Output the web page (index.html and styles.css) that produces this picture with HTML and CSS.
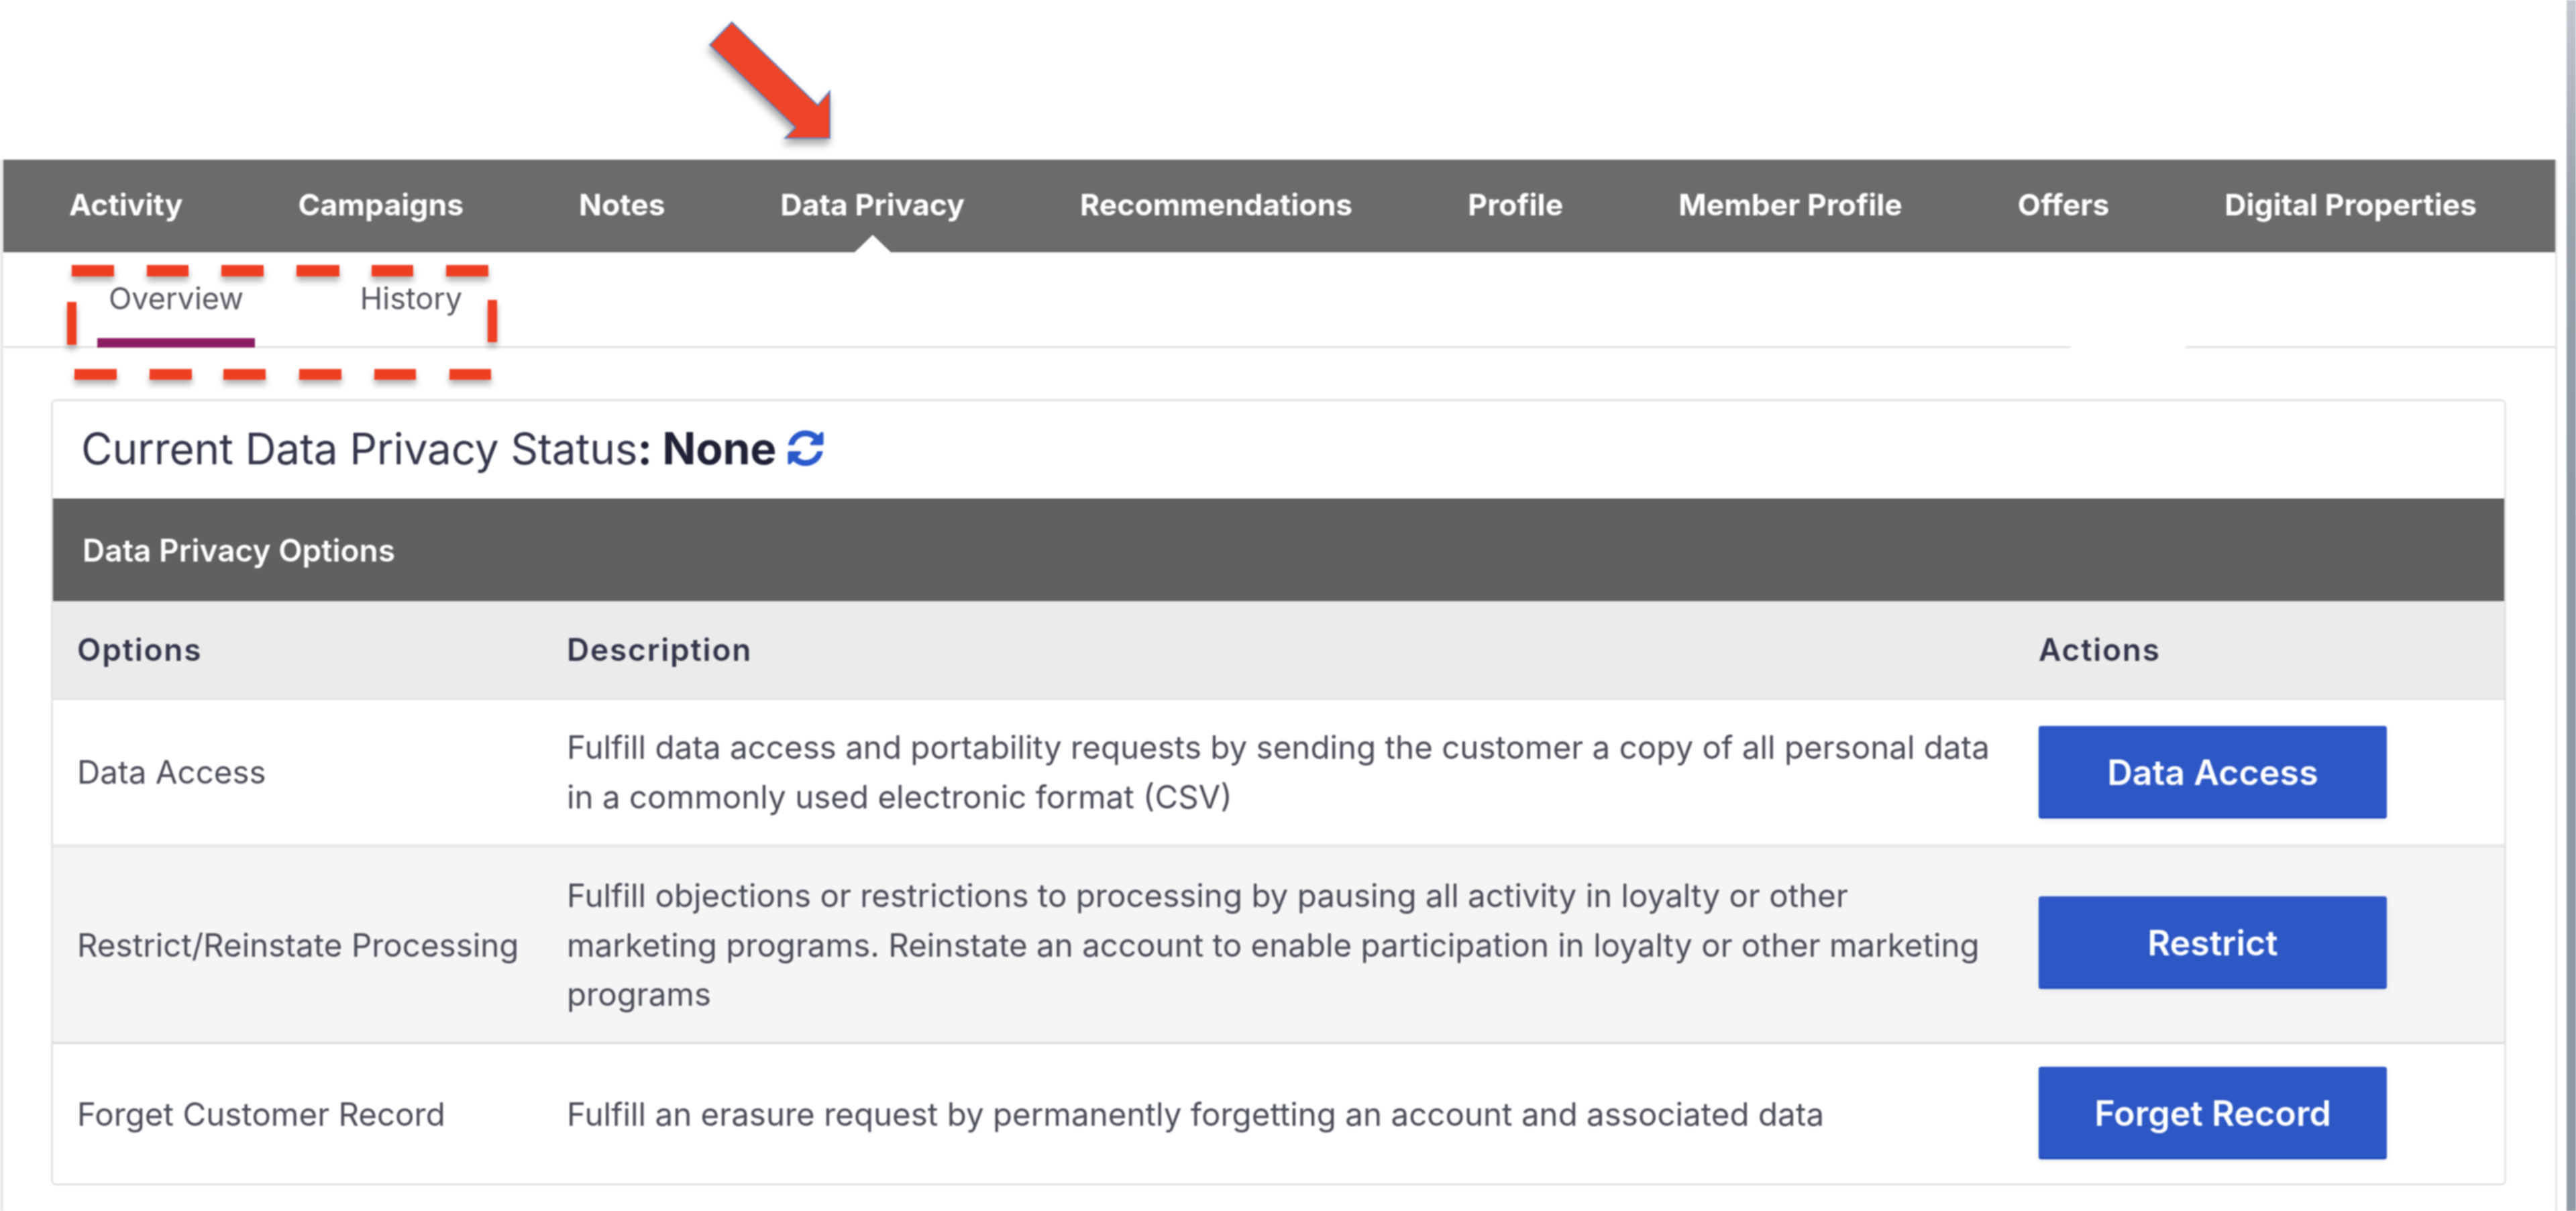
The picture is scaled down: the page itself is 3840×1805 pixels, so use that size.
FILE: index.html
```html
<!DOCTYPE html>
<html lang="en">
<head>
<meta charset="utf-8">
<title>Data Privacy</title>
<link rel="stylesheet" href="styles.css">
</head>
<body>
<div class="page">
  <div class="frame">
    <nav class="nav">
      <a class="nav-item">Activity</a>
      <a class="nav-item">Campaigns</a>
      <a class="nav-item">Notes</a>
      <a class="nav-item active">Data Privacy</a>
      <a class="nav-item">Recommendations</a>
      <a class="nav-item">Profile</a>
      <a class="nav-item">Member Profile</a>
      <a class="nav-item">Offers</a>
      <a class="nav-item">Digital Properties</a>
    </nav>
    <div class="tabs">
      <a class="tab selected">Overview</a>
      <a class="tab">History</a>
      <span class="line-gap"></span>
    </div>
    <section class="card">
      <h1 class="status"><span class="status-text">Current Data Privacy Status<strong>: None</strong></span>
        <svg class="refresh" viewBox="0 0 1792 1792" aria-hidden="true"><path d="M1639 1056q0 5-1 7-64 268-268 434.500t-478 166.500q-146 0-282.500-55t-243.500-157l-129 129q-19 19-45 19t-45-19-19-45v-448q0-26 19-45t45-19h448q26 0 45 19t19 45-19 45l-137 137q71 66 161 102t187 36q134 0 250-65t186-179q11-17 53-117 8-23 30-23h192q13 0 22.500 9.500t9.500 22.500zm25-800v448q0 26-19 45t-45 19h-448q-26 0-45-19t-19-45 19-45l138-138q-148-137-349-137-134 0-250 65t-186 179q-11 17-53 117-8 23-30 23h-199q-13 0-22.500-9.500t-9.500-22.500v-7q65-268 270-434.500t480-166.500q146 0 284 55.500t245 156.500l130-129q19-19 45-19t45 19 19 45z"/></svg>
      </h1>
      <h2 class="band">Data Privacy Options</h2>
      <table class="options">
        <colgroup><col class="c1"><col class="c2"><col class="c3"></colgroup>
        <thead>
          <tr class="head"><th>Options</th><th>Description</th><th>Actions</th></tr>
        </thead>
        <tbody>
          <tr class="r1">
            <td>Data Access</td>
            <td>Fulfill data access and portability requests by sending the customer a copy of all personal data<br>in a commonly used electronic format (CSV)</td>
            <td><button class="btn">Data Access</button></td>
          </tr>
          <tr class="r2">
            <td>Restrict/Reinstate Processing</td>
            <td>Fulfill objections or restrictions to processing by pausing all activity in loyalty or other<br>marketing programs. Reinstate an account to enable participation in loyalty or other marketing<br>programs</td>
            <td><button class="btn">Restrict</button></td>
          </tr>
          <tr class="r3">
            <td>Forget Customer Record</td>
            <td>Fulfill an erasure request by permanently forgetting an account and associated data</td>
            <td><button class="btn">Forget Record</button></td>
          </tr>
        </tbody>
      </table>
    </section>
  </div>
  <div class="edge"></div>
  <svg class="annot" viewBox="0 0 3840 1805" aria-hidden="true">
    <polygon class="arrow" points="1091,33 1219,157 1237,136 1237,206 1170,206 1186,190 1058,67"/>
    <g class="dash">
      <rect x="107" y="395" width="63" height="17"/><rect x="219" y="395" width="62" height="17"/><rect x="330" y="395" width="63" height="17"/><rect x="442" y="395" width="64" height="17"/><rect x="554" y="395" width="62" height="17"/><rect x="665" y="395" width="63" height="17"/>
      <rect x="100" y="450" width="14" height="64"/><rect x="727" y="447" width="14" height="63"/>
      <rect x="111" y="550" width="63" height="16"/><rect x="223" y="550" width="63" height="16"/><rect x="333" y="550" width="63" height="16"/><rect x="446" y="550" width="63" height="16"/><rect x="558" y="550" width="62" height="16"/><rect x="670" y="550" width="62" height="16"/>
    </g>
  </svg>
</div>
</body>
</html>
```
FILE: styles.css
```css
* { box-sizing: border-box; }
html, body { margin: 0; padding: 0; background: #fff; }
body { font-family: "Inter", "Liberation Sans", sans-serif; color: #3c3e4c; }
.page { position: relative; width: 3840px; height: 1805px; overflow: hidden; padding: 238px 0 0 0; filter: blur(1.2px); background: #fff; }
.frame { width: 3812px; height: 1567px; border-left: 5px solid #e9e9e9; border-right: 3px solid #e6e6e6; display: flex; flex-direction: column; }
.nav { height: 138px; background: #6b6b6b; display: flex; align-items: center; gap: 172px; padding: 0 0 0 98px; flex: none; }
.nav-item { position: relative; color: #fff; font-size: 44.5px; font-weight: 700; line-height: 134px; height: 138px; white-space: nowrap; }
.nav-item.active::after { content: ""; position: absolute; left: 50%; bottom: 0; margin-left: -27px; border-left: 27px solid transparent; border-right: 27px solid transparent; border-bottom: 26px solid #fff; }
.tabs { position: relative; height: 143px; flex: none; display: flex; border-bottom: 3px solid #e4e4e4; padding-left: 140px; gap: 0; }
.tab { width: 235px; margin-right: 148px; height: 142px; padding-top: 42px; text-align: center; color: #55575f; font-size: 45px; line-height: 54px; }
.tab + .tab { width: 170px; margin-right: 0; }
.tab.selected { border-bottom: 14px solid #8b1e63; }
.line-gap { position: absolute; left: 3082px; width: 171px; bottom: -3px; height: 3px; background: #fff; }
.card { margin: 76px 0 0 71px; width: 3660px; height: 1172px; border: 3px solid #e3e3e3; border-radius: 8px; flex: none; background: #fff; overflow: hidden; }
.status { margin: 0; height: 145px; padding: 0 0 6px 42px; display: flex; align-items: center; gap: 13px; font-size: 64px; font-weight: 400; color: #33354a; white-space: pre; }
.status-text { letter-spacing: -0.3px; }
.status strong { font-weight: 700; font-size: 66px; color: #1f2236; }
.refresh { width: 62px; height: 62px; fill: #2a59cc; }
.band { margin: 0; height: 153px; background: #606060; color: #fff; font-size: 46px; font-weight: 600; display: flex; align-items: center; padding-left: 44px; }
.options { border-collapse: collapse; width: 100%; table-layout: fixed; font-size: 47.5px; line-height: 73.5px; color: #4a4c58; }
.c1 { width: 730px; }
.c2 { width: 2194px; }
th, td { text-align: left; padding: 0 0 0 36px; vertical-align: middle; }
th { color: #33354a; font-weight: 600; font-size: 46px; letter-spacing: 1.8px; }
.head { height: 146px; background: #ebebeb; }
.r1 { height: 219px; background: #fff; border-top: 2px solid #dedede; }
.r2 { height: 293px; background: #f5f5f5; border-top: 6px solid #e8e8e8; }
.r3 { height: 212px; background: #fff; border-top: 3px solid #d8d8d8; }
.btn { display: block; width: 519px; height: 138px; border: 0; border-bottom: 3px solid #1f4cc0; border-radius: 4px; background: #2c57c4; color: #fff; font-family: inherit; font-size: 52px; font-weight: 600; box-shadow: 0 3px 10px rgba(0,0,0,.08); padding: 4px 0 0; }
.r2 .btn { margin-top: -7px; }
.r3 .btn { margin-top: -4px; }
.edge { position: absolute; right: 0; top: 0; bottom: 0; width: 14px; background: linear-gradient(180deg, #c4c8d0 0, #9aa2ac 300px, #8f98a3 800px); }
.annot { position: absolute; left: 0; top: 0; width: 3840px; height: 1805px; pointer-events: none; }
.arrow { fill: #ee4528; stroke: #5f86c4; stroke-width: 2px; filter: drop-shadow(-2px 8px 6px rgba(0,0,0,.35)); }
.dash rect { fill: #ee3f22; }
.dash { filter: drop-shadow(0 7px 5px rgba(0,0,0,.3)); }
```
